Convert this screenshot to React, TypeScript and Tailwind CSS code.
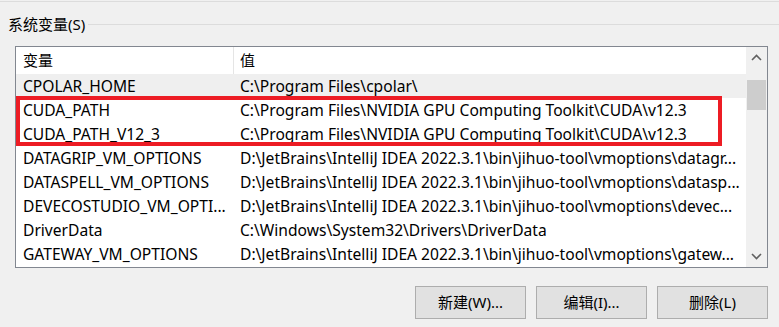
const rows = [
  { name: "CPOLAR_HOME", value: "C:\\Program Files\\cpolar\\", active: true },
  { name: "CUDA_PATH", value: "C:\\Program Files\\NVIDIA GPU Computing Toolkit\\CUDA\\v12.3" },
  { name: "CUDA_PATH_V12_3", value: "C:\\Program Files\\NVIDIA GPU Computing Toolkit\\CUDA\\v12.3" },
  { name: "DATAGRIP_VM_OPTIONS", value: "D:\\JetBrains\\IntelliJ IDEA 2022.3.1\\bin\\jihuo-tool\\vmoptions\\datagr..." },
  { name: "DATASPELL_VM_OPTIONS", value: "D:\\JetBrains\\IntelliJ IDEA 2022.3.1\\bin\\jihuo-tool\\vmoptions\\datasp..." },
  { name: "DEVECOSTUDIO_VM_OPTI...", value: "D:\\JetBrains\\IntelliJ IDEA 2022.3.1\\bin\\jihuo-tool\\vmoptions\\devec..." },
  { name: "DriverData", value: "C:\\Windows\\System32\\Drivers\\DriverData" },
  { name: "GATEWAY_VM_OPTIONS", value: "D:\\JetBrains\\IntelliJ IDEA 2022.3.1\\bin\\jihuo-tool\\vmoptions\\gatew..." },
];

function Chevron({ up }: { up?: boolean }) {
  return (
    <svg width="11" height="7" viewBox="0 0 11 7" className="block">
      <polyline
        points={up ? "1,6 5.5,1.5 10,6" : "1,1 5.5,5.5 10,1"}
        fill="none"
        stroke="#606060"
        strokeWidth="1.6"
      />
    </svg>
  );
}

export default function App() {
  return (
    <div className="relative w-[779px] h-[327px] overflow-hidden bg-[#f0f0f0] text-[15px] text-black font-['Noto_Sans','Noto_Sans_CJK_SC',sans-serif]">
      <div className="pt-px">
        <div className="h-px bg-[#dcdcdc]" />
      </div>

      {/* group title */}
      <div className="mt-[12px] flex h-[21px] items-center pl-[8px]">
        <span className="leading-none">系统变量(S)</span>
        <div className="ml-[3px] h-px flex-1 bg-[#dcdcdc]" />
      </div>

      {/* list */}
      <div className="ml-[15px] mt-[11px] flex h-[222px] w-[753px] border border-[#828790] bg-white">
        <div className="w-[730px] overflow-hidden">
          <div className="flex h-[27px] items-center">
            <div className="flex h-full w-[217px] items-center pl-[7px]">变量</div>
            <div className="h-full w-px bg-[#e5e5e5]" />
            <div className="pl-[6px]">值</div>
          </div>
          {rows.map((r) => (
            <div
              key={r.name}
              className={`flex h-[24px] items-center whitespace-nowrap pt-px text-[15.6px] ${r.active ? "bg-[#efefef]" : ""}`}
            >
              <div className="w-[218px] overflow-hidden pl-[7px]">{r.name}</div>
              <div className="overflow-hidden pl-[6px]">{r.value}</div>
            </div>
          ))}
        </div>
        <div className="flex w-[21px] flex-col bg-[#f0f0f0]">
          <div className="flex h-[21px] items-center justify-center">
            <Chevron up />
          </div>
          <div className="mt-[12px] ml-px h-[30px] w-[19px] bg-[#cdcdcd]" />
          <div className="flex-1" />
          <div className="flex h-[21px] items-center justify-center">
            <Chevron />
          </div>
        </div>
      </div>

      {/* red annotation */}
      <div className="absolute left-[16px] top-[96px] h-[50px] w-[706px] border-[4px] border-[#ed1c24]" />

      {/* buttons */}
      <div className="mt-[18px] flex justify-end gap-[10px] pr-[11px]">
        {["新建(W)...", "编辑(I)...", "删除(L)"].map((t) => (
          <button
            key={t}
            className="flex h-[33px] w-[111px] items-center justify-center border border-[#adadad] bg-[#e1e1e1]"
          >
            {t}
          </button>
        ))}
      </div>
    </div>
  );
}
